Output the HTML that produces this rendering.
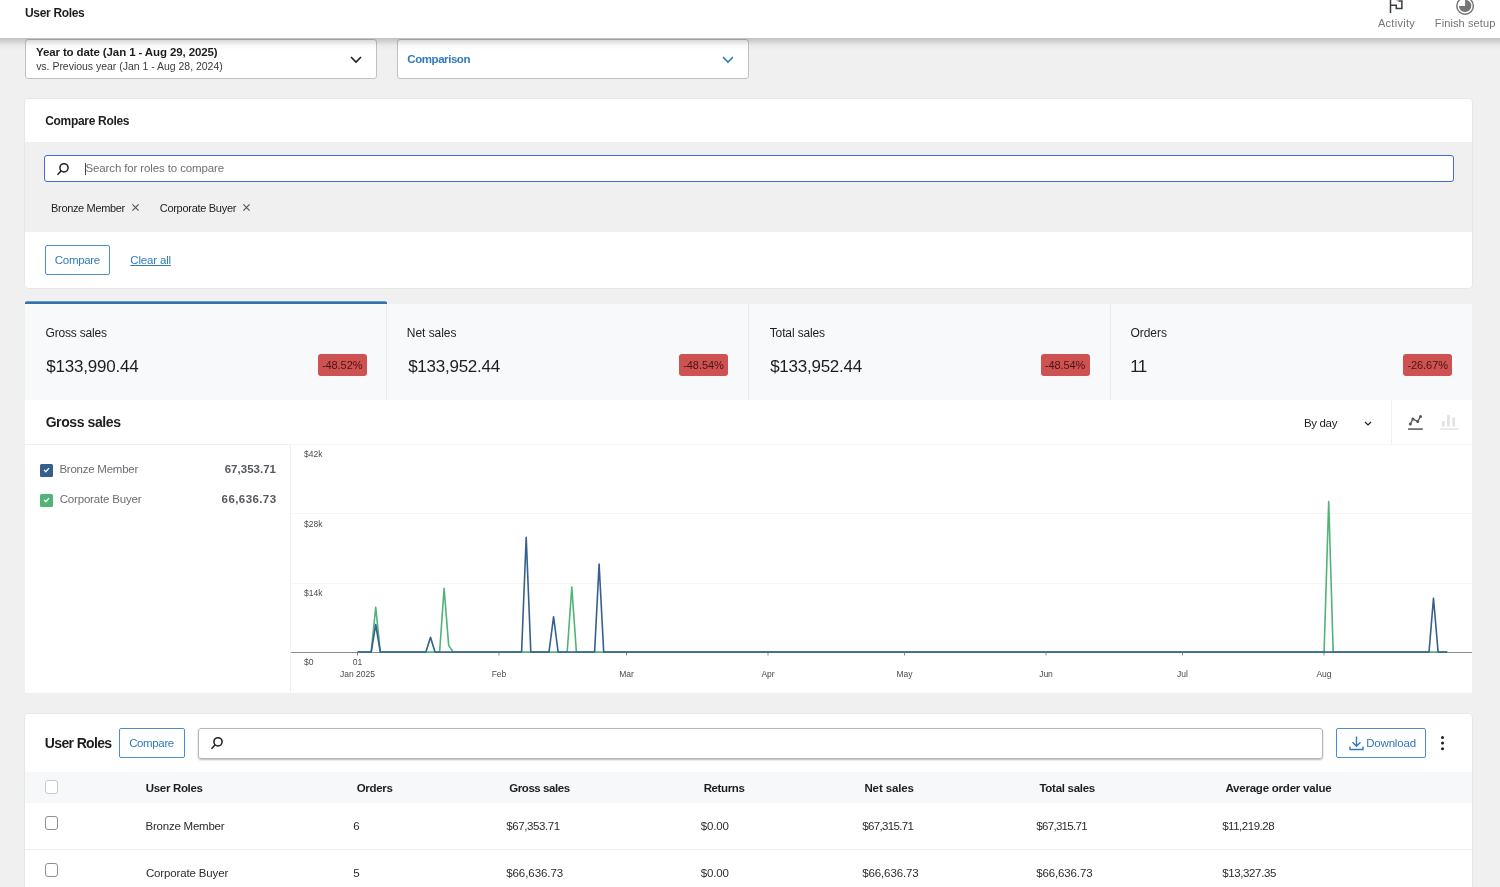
<!DOCTYPE html>
<html><head><meta charset="utf-8">
<style>
*{box-sizing:border-box;margin:0;padding:0}
html,body{width:1500px;height:887px;overflow:hidden;background:#f0f0f0;font-family:"Liberation Sans",sans-serif;color:#1e1e1e}
.abs{position:absolute}
.t{position:absolute;white-space:nowrap;line-height:1}
.badge{position:absolute;background:#cf5252;border-radius:3px;width:49px;height:21.6px}
.cb{position:absolute;width:13.6px;height:13.6px;border:1px solid #8c8f94;border-radius:3px;background:#fff}
</style></head><body><div id="L" style="position:absolute;left:0;top:0;width:1500px;height:887px;will-change:transform">
<div class="abs" style="left:0;top:0;width:1500px;height:38px;background:#fff;z-index:5"></div>
<div class="abs" style="left:0;top:38px;width:1500px;height:12px;background:linear-gradient(rgba(0,0,0,.2),rgba(0,0,0,.1) 35%,rgba(0,0,0,.025) 62%,rgba(0,0,0,0));z-index:5"></div>
<div class="abs" style="left:0;top:0;z-index:6">
<div class="t" style="left:24.98px;top:6.64px;font-size:12px;color:#1e1e1e;font-weight:bold;letter-spacing:-0.322px;">User Roles</div>
<div class="t" style="left:1378.00px;top:17.53px;font-size:11px;color:#757575;letter-spacing:0.269px;">Activity</div>
<div class="t" style="left:1434.82px;top:17.53px;font-size:11px;color:#757575;letter-spacing:0.112px;">Finish setup</div>
<svg class="abs" style="left:1386px;top:0" width="20" height="14" viewBox="0 0 20 14"><path d="M4.5 0V13" fill="none" stroke="#3c3c3c" stroke-width="1.5"/><path d="M4.5 5.2h5.8v3.2h5.6V1.1h-3.6" fill="none" stroke="#3c3c3c" stroke-width="1.5"/><circle cx="11.6" cy="0.3" r="1.3" fill="#e9a3b4"/></svg>
<svg class="abs" style="left:1455px;top:-4px" width="20" height="20" viewBox="0 0 20 20"><circle cx="10.1" cy="9.9" r="8.3" fill="none" stroke="#757575" stroke-width="1.5"/><path d="M10.1 9.9V3.7A6.2 6.2 0 1 1 3.9 9.9z" fill="#757575"/></svg>
</div>
<div class="abs" style="left:25px;top:38.5px;width:352px;height:40px;background:#fff;border:1px solid #bfc0c3;border-radius:3px"></div>
<div class="t" style="left:35.97px;top:46.98px;font-size:11.5px;color:#1e1e1e;font-weight:bold;letter-spacing:-0.115px;">Year to date (Jan 1 - Aug 29, 2025)</div>
<div class="t" style="left:36.15px;top:60.57px;font-size:10.5px;color:#3c3c3c;letter-spacing:-0.019px;">vs. Previous year (Jan 1 - Aug 28, 2024)</div>
<svg class="abs" style="left:350px;top:56px" width="12" height="8" viewBox="0 0 12 8"><path d="M1 1l5 5 5-5" fill="none" stroke="#1e1e1e" stroke-width="1.6"/></svg>
<div class="abs" style="left:396.5px;top:38.5px;width:352px;height:40px;background:#fff;border:1px solid #bfc0c3;border-radius:3px"></div>
<div class="t" style="left:407.34px;top:53.78px;font-size:11.5px;color:#3079bb;font-weight:bold;letter-spacing:-0.439px;">Comparison</div>
<svg class="abs" style="left:722px;top:56px" width="12" height="8" viewBox="0 0 12 8"><path d="M1 1l5 5 5-5" fill="none" stroke="#3079bb" stroke-width="1.6"/></svg>
<div class="abs" style="left:25px;top:99px;width:1447px;height:189px;background:#fff;border-radius:4px;box-shadow:0 0 0 1px rgba(0,0,0,.035)"></div>
<div class="abs" style="left:25px;top:142px;width:1447px;height:90px;background:#f0f0f0"></div>
<div class="abs" style="left:44px;top:155px;width:1410px;height:27px;background:#fff;border:1.5px solid #4668db;border-radius:3px"></div>
<svg class="abs" style="left:56px;top:162px" width="14" height="14" viewBox="0 0 14 14"><circle cx="8" cy="5.8" r="4.1" fill="none" stroke="#1e1e1e" stroke-width="1.5"/><path d="M5 9L1.5 12.8" stroke="#1e1e1e" stroke-width="1.5"/></svg>
<div class="abs" style="left:85px;top:162.7px;width:1px;height:12px;background:#444"></div>
<div class="t" style="left:45.22px;top:114.54px;font-size:12px;color:#1e1e1e;font-weight:bold;letter-spacing:-0.313px;">Compare Roles</div>
<div class="t" style="left:85.48px;top:163.38px;font-size:11.5px;color:#707070;letter-spacing:-0.122px;">Search for roles to compare</div>
<div class="t" style="left:51.12px;top:202.93px;font-size:11px;color:#1e1e1e;letter-spacing:-0.347px;">Bronze Member</div>
<div class="t" style="left:159.75px;top:202.93px;font-size:11px;color:#1e1e1e;letter-spacing:-0.291px;">Corporate Buyer</div>
<svg class="abs" style="left:131.1px;top:203.4px" width="9" height="9" viewBox="0 0 9 9"><path d="M1.4 1.4l6.2 6.2M7.6 1.4l-6.2 6.2" stroke="#555a60" stroke-width="1.2"/></svg>
<svg class="abs" style="left:242.2px;top:203.4px" width="9" height="9" viewBox="0 0 9 9"><path d="M1.4 1.4l6.2 6.2M7.6 1.4l-6.2 6.2" stroke="#555a60" stroke-width="1.2"/></svg>
<div class="abs" style="left:45px;top:245px;width:65px;height:30px;border:1px solid #4a8ecb;border-radius:2px"></div>
<div class="t" style="left:54.82px;top:255.08px;font-size:11.5px;color:#3079bb;letter-spacing:-0.312px;">Compare</div>
<div class="t" style="left:130.33px;top:255.08px;font-size:11.5px;color:#3079bb;letter-spacing:-0.178px;text-decoration:underline;">Clear all</div>
<div class="abs" style="left:25px;top:304px;width:1447px;height:96px;background:#f8f9fa"></div>
<div class="abs" style="left:25px;top:301px;width:362px;height:3px;background:linear-gradient(rgba(53,114,171,.7) 0,rgba(53,114,171,.7) 33.4%,#3572ab 33.4%);border-radius:2px 2px 0 0"></div>
<div class="abs" style="left:386.0px;top:304px;width:1px;height:96px;background:#e8e9ea"></div>
<div class="abs" style="left:748.0px;top:304px;width:1px;height:96px;background:#e8e9ea"></div>
<div class="abs" style="left:1110.0px;top:304px;width:1px;height:96px;background:#e8e9ea"></div>
<div class="t" style="left:45.60px;top:327.04px;font-size:12px;color:#1e1e1e;letter-spacing:-0.204px;">Gross sales</div>
<div class="t" style="left:46.33px;top:358.10px;font-size:17px;color:#1e1e1e;letter-spacing:-0.214px;">$133,990.44</div>
<div class="badge" style="left:317.7px;top:354.1px"></div>
<div class="t" style="left:321.90px;top:359.73px;font-size:11px;color:#4a1414;letter-spacing:-0.066px;">-48.52%</div>
<div class="t" style="left:406.84px;top:327.04px;font-size:12px;color:#1e1e1e;letter-spacing:-0.045px;">Net sales</div>
<div class="t" style="left:408.13px;top:358.10px;font-size:17px;color:#1e1e1e;letter-spacing:-0.244px;">$133,952.44</div>
<div class="badge" style="left:679px;top:354.1px"></div>
<div class="t" style="left:683.20px;top:359.73px;font-size:11px;color:#4a1414;letter-spacing:-0.066px;">-48.54%</div>
<div class="t" style="left:769.76px;top:327.04px;font-size:12px;color:#1e1e1e;letter-spacing:-0.134px;">Total sales</div>
<div class="t" style="left:770.13px;top:358.10px;font-size:17px;color:#1e1e1e;letter-spacing:-0.244px;">$133,952.44</div>
<div class="badge" style="left:1040.6px;top:354.1px"></div>
<div class="t" style="left:1044.81px;top:359.73px;font-size:11px;color:#4a1414;letter-spacing:-0.066px;">-48.54%</div>
<div class="t" style="left:1130.56px;top:327.04px;font-size:12px;color:#1e1e1e;letter-spacing:-0.060px;">Orders</div>
<div class="t" style="left:1130.33px;top:358.10px;font-size:17px;color:#1e1e1e;letter-spacing:-0.755px;">11</div>
<div class="badge" style="left:1403.2px;top:354.1px"></div>
<div class="t" style="left:1407.41px;top:359.73px;font-size:11px;color:#4a1414;letter-spacing:-0.066px;">-26.67%</div>
<div class="abs" style="left:25px;top:400px;width:1447px;height:293px;background:#fff"></div>
<div class="abs" style="left:25px;top:444px;width:1447px;height:1px;background:#f0f0f0"></div>
<div class="abs" style="left:290px;top:444px;width:1px;height:249px;background:#f0f0f0"></div>
<div class="abs" style="left:1391px;top:400px;width:1px;height:44px;background:#f0f0f0"></div>
<div class="t" style="left:45.64px;top:415.16px;font-size:14px;color:#1e1e1e;font-weight:bold;letter-spacing:-0.406px;">Gross sales</div>
<div class="t" style="left:1303.98px;top:417.68px;font-size:11.5px;color:#1e1e1e;letter-spacing:-0.342px;">By day</div>
<svg class="abs" style="left:1364px;top:420.5px" width="8" height="6" viewBox="0 0 8 6"><path d="M1 1l3 3 3-3" fill="none" stroke="#1e1e1e" stroke-width="1.2"/></svg>
<svg class="abs" style="left:1405px;top:410px" width="22" height="24" viewBox="0 0 22 24"><path d="M5.3 14.1L7.9 9 12.7 11.6 15.5 6.5" fill="none" stroke="#555" stroke-width="1.3"/><g fill="#555"><circle cx="5.3" cy="14.1" r="1.5"/><circle cx="7.9" cy="9" r="1.5"/><circle cx="12.7" cy="11.6" r="1.5"/><circle cx="15.5" cy="6.5" r="1.5"/></g><path d="M3 19.1h14.8" stroke="#555" stroke-width="1.5"/></svg>
<svg class="abs" style="left:1438px;top:410px" width="24" height="24" viewBox="0 0 24 24"><path d="M5.3 11v5.5M10.4 5v11.5M15.7 7.5v9" stroke="#e2e3e4" stroke-width="2.8"/><path d="M2.4 19.1h18.4" stroke="#e2e3e4" stroke-width="1.4"/></svg>
<div class="abs" style="left:39.9px;top:464px;width:12.8px;height:12.8px;background:#355f8d;border-radius:1.5px"></div>
<svg class="abs" style="left:43px;top:467.1px" width="7" height="6" viewBox="0 0 7 6"><path d="M1 2.9l1.8 1.8L6 1.1" fill="none" stroke="#fff" stroke-width="1.3"/></svg>
<div class="abs" style="left:39.9px;top:494px;width:12.8px;height:12.8px;background:#52b378;border-radius:1.5px"></div>
<svg class="abs" style="left:43px;top:497.1px" width="7" height="6" viewBox="0 0 7 6"><path d="M1 2.9l1.8 1.8L6 1.1" fill="none" stroke="#fff" stroke-width="1.3"/></svg>
<div class="t" style="left:59.38px;top:464.38px;font-size:11.5px;color:#6a6d72;letter-spacing:-0.239px;">Bronze Member</div>
<div class="t" style="left:59.72px;top:494.38px;font-size:11.5px;color:#6a6d72;letter-spacing:-0.186px;">Corporate Buyer</div>
<div class="t" style="left:224.70px;top:464.38px;font-size:11.5px;color:#55595f;font-weight:bold;letter-spacing:0.014px;">67,353.71</div>
<div class="t" style="left:221.60px;top:494.38px;font-size:11.5px;color:#55595f;font-weight:bold;letter-spacing:0.416px;">66,636.73</div>
<svg class="abs" style="left:0;top:0" width="1500" height="887">
<path d="M291 444.5H1472M291 513.5H1472M291 583.5H1472" stroke="#f5f5f5"/>
<path d="M291 652.5H1472" stroke="#8a8c90"/>
<path d="M357.5 652v3.5M499 652v3.5M626.5 652v3.5M768 652v3.5M904.5 652v3.5M1046 652v3.5M1182.5 652v3.5M1324 652v3.5" stroke="#8a8c90"/>
<g font-family="Liberation Sans" font-size="8.5" fill="#4a4a4a"><text x="304" y="457">$42k</text><text x="304" y="527">$28k</text><text x="304" y="596">$14k</text><text x="304" y="665">$0</text><g text-anchor="middle"><text x="357.5" y="665">01</text><text x="357.5" y="677">Jan 2025</text><text x="499" y="677">Feb</text><text x="626.5" y="677">Mar</text><text x="768" y="677">Apr</text><text x="904.5" y="677">May</text><text x="1046" y="677">Jun</text><text x="1182.5" y="677">Jul</text><text x="1324" y="677">Aug</text></g></g>
<path d="M357.5 652L371.2 652L375.7 607.2L380.3 652L439.6 652L444.1 588.4L448.7 645.6L453.2 652L567.2 652L571.8 587L576.4 652L1324.1 652L1328.7 501.5L1333.2 652L1447.2 652" fill="none" stroke="#52b378" stroke-width="1.6" stroke-linejoin="round"/>
<path d="M357.5 652L371.2 652L375.7 624.5L380.3 652L425.9 652L430.5 637.3L435.0 652L521.6 652L526.2 537.3L530.8 652L549.0 652L553.6 616.7L558.1 652L594.6 652L599.1 564L603.7 652L1429.0 652L1433.5 598.3L1438.1 652L1447.2 652" fill="none" stroke="#355f8d" stroke-width="1.6" stroke-linejoin="round"/>
</svg>
<div class="abs" style="left:25px;top:714px;width:1447px;height:180px;background:#fff;border-radius:4px;box-shadow:0 0 0 1px rgba(0,0,0,.035)"></div>
<div class="t" style="left:44.86px;top:735.76px;font-size:14px;color:#1e1e1e;font-weight:bold;letter-spacing:-0.650px;">User Roles</div>
<div class="abs" style="left:119px;top:728px;width:66px;height:30px;border:1px solid #4a8ecb;border-radius:2px"></div>
<div class="t" style="left:129.13px;top:737.78px;font-size:11.5px;color:#3079bb;letter-spacing:-0.362px;">Compare</div>
<div class="abs" style="left:198px;top:727.5px;width:1125px;height:31px;border:1px solid #b4b5b8;border-radius:3px;box-shadow:0 1px 2px rgba(0,0,0,.28)"></div>
<svg class="abs" style="left:209.5px;top:736px" width="14" height="14" viewBox="0 0 14 14"><circle cx="8" cy="5.8" r="4.1" fill="none" stroke="#1e1e1e" stroke-width="1.5"/><path d="M5 9L1.5 12.8" stroke="#1e1e1e" stroke-width="1.5"/></svg>
<div class="abs" style="left:1336px;top:728px;width:90px;height:30px;border:1px solid #4a8ecb;border-radius:2px"></div>
<svg class="abs" style="left:1349px;top:735.5px" width="15" height="15" viewBox="0 0 15 15"><path d="M7.5 0.5v9.5M3.5 6.3l4 4 4-4M1 10.5v3h13v-3" fill="none" stroke="#3079bb" stroke-width="1.4"/></svg>
<div class="t" style="left:1366.18px;top:737.78px;font-size:11.5px;color:#3079bb;letter-spacing:-0.179px;">Download</div>
<div class="abs" style="left:1440.6px;top:735.8px;width:3.3px;height:3.3px;background:#1e1e1e;border-radius:2px;box-shadow:0 5.6px 0 #1e1e1e,0 11.2px 0 #1e1e1e"></div>
<div class="abs" style="left:25px;top:771.5px;width:1447px;height:31px;background:#f7f8f9"></div>
<div class="abs" style="left:25px;top:849px;width:1447px;height:1px;background:#eeefef"></div>
<div class="cb" style="left:44.5px;top:780px;border-color:#c8c9cc"></div>
<div class="cb" style="left:44.5px;top:816px"></div>
<div class="cb" style="left:44.5px;top:863px"></div>
<div class="t" style="left:145.81px;top:782.88px;font-size:11.5px;color:#1e1e1e;font-weight:bold;letter-spacing:-0.326px;">User Roles</div>
<div class="t" style="left:356.74px;top:782.88px;font-size:11.5px;color:#1e1e1e;font-weight:bold;letter-spacing:-0.320px;">Orders</div>
<div class="t" style="left:509.24px;top:782.88px;font-size:11.5px;color:#1e1e1e;font-weight:bold;letter-spacing:-0.428px;">Gross sales</div>
<div class="t" style="left:703.65px;top:782.88px;font-size:11.5px;color:#1e1e1e;font-weight:bold;letter-spacing:-0.367px;">Returns</div>
<div class="t" style="left:864.45px;top:782.88px;font-size:11.5px;color:#1e1e1e;font-weight:bold;letter-spacing:-0.122px;">Net sales</div>
<div class="t" style="left:1039.49px;top:782.88px;font-size:11.5px;color:#1e1e1e;font-weight:bold;letter-spacing:-0.282px;">Total sales</div>
<div class="t" style="left:1225.41px;top:782.88px;font-size:11.5px;color:#1e1e1e;font-weight:bold;letter-spacing:-0.221px;">Average order value</div>
<div class="t" style="left:145.58px;top:820.98px;font-size:11.5px;color:#2c2c2c;letter-spacing:-0.231px;">Bronze Member</div>
<div class="t" style="left:353.22px;top:820.98px;font-size:11.5px;color:#2c2c2c;">6</div>
<div class="t" style="left:506.18px;top:820.98px;font-size:11.5px;color:#2c2c2c;letter-spacing:-0.403px;">$67,353.71</div>
<div class="t" style="left:700.78px;top:820.98px;font-size:11.5px;color:#2c2c2c;letter-spacing:-0.183px;">$0.00</div>
<div class="t" style="left:862.18px;top:820.98px;font-size:11.5px;color:#2c2c2c;letter-spacing:-0.636px;">$67,315.71</div>
<div class="t" style="left:1036.29px;top:820.98px;font-size:11.5px;color:#2c2c2c;letter-spacing:-0.692px;">$67,315.71</div>
<div class="t" style="left:1222.19px;top:820.98px;font-size:11.5px;color:#2c2c2c;letter-spacing:-0.480px;">$11,219.28</div>
<div class="t" style="left:145.93px;top:867.98px;font-size:11.5px;color:#2c2c2c;letter-spacing:-0.143px;">Corporate Buyer</div>
<div class="t" style="left:353.34px;top:867.98px;font-size:11.5px;color:#2c2c2c;">5</div>
<div class="t" style="left:506.18px;top:867.98px;font-size:11.5px;color:#2c2c2c;letter-spacing:-0.054px;">$66,636.73</div>
<div class="t" style="left:700.78px;top:867.98px;font-size:11.5px;color:#2c2c2c;letter-spacing:-0.183px;">$0.00</div>
<div class="t" style="left:862.18px;top:867.98px;font-size:11.5px;color:#2c2c2c;letter-spacing:-0.109px;">$66,636.73</div>
<div class="t" style="left:1036.29px;top:867.98px;font-size:11.5px;color:#2c2c2c;letter-spacing:-0.142px;">$66,636.73</div>
<div class="t" style="left:1222.19px;top:867.98px;font-size:11.5px;color:#2c2c2c;letter-spacing:-0.376px;">$13,327.35</div>
</div></body></html>
